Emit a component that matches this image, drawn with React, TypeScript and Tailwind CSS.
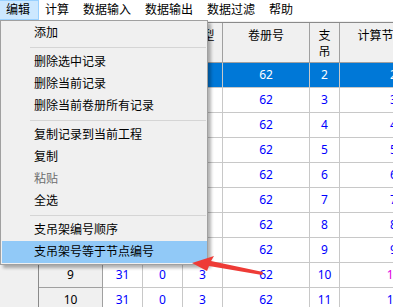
import React from 'react';

const font = { fontFamily: '"Noto Sans", "Noto Sans CJK SC", sans-serif' };

const menuBar = ['编辑', '计算', '数据输入', '数据输出', '数据过滤', '帮助'];

type Item = { label?: string; sep?: boolean; disabled?: boolean; active?: boolean };

const menuItems: Item[] = [
  { label: '添加' },
  { sep: true },
  { label: '删除选中记录' },
  { label: '删除当前记录' },
  { label: '删除当前卷册所有记录' },
  { sep: true },
  { label: '复制记录到当前工程' },
  { label: '复制' },
  { label: '粘贴', disabled: true },
  { label: '全选' },
  { sep: true },
  { label: '支吊架编号顺序' },
  { label: '支吊架号等于节点编号', active: true },
];

const rows = Array.from({ length: 10 }, (_, i) => i + 1);

export default function App() {
  return (
    <div className="relative w-[393px] h-[307px] overflow-hidden bg-[#f0f0f0] text-[12px] text-black" style={font}>
      {/* Menu bar */}
      <div className="flex h-[21px] bg-white">
        {menuBar.map((m, i) => (
          <div
            key={m}
            className={
              i === 0
                ? 'flex items-center pl-[6px] pr-[8px] h-[20px] bg-[#cce8ff] border border-[#99d1ff] -ml-px'
                : 'flex items-center pl-[6px] pr-[8px] h-[20px]'
            }
          >
            {m}
          </div>
        ))}
      </div>
      <div className="h-px" />

      {/* Grid */}
      <div className="flex">
        <div className="w-[38px] shrink-0" />
        <div className="grid grid-cols-[64px_40px_40px_40px_87px_30px_108px] shrink-0 border-l border-t border-[#8a8a8a]">
          {/* header */}
          <div className="h-[40px] bg-[#f0f0f0] border-r border-b border-[#a0a0a0]" />
          <div className="h-[40px] bg-[#f0f0f0] border-r border-b border-[#a0a0a0] flex justify-center pt-[5px] leading-[16px]">编号</div>
          <div className="h-[40px] bg-[#f0f0f0] border-r border-b border-[#a0a0a0] flex justify-center pt-[5px] leading-[16px]">序号</div>
          <div className="h-[40px] bg-[#f0f0f0] border-r border-b border-[#a0a0a0] flex justify-center pt-[5px] leading-[16px] whitespace-nowrap">类型</div>
          <div className="h-[40px] bg-[#f0f0f0] border-r border-b border-[#a0a0a0] flex justify-center pt-[5px] leading-[16px]">卷册号</div>
          <div className="h-[40px] bg-[#f0f0f0] border-r border-b border-[#a0a0a0] text-center pt-[5px] leading-[16px]">
            支<br />吊
          </div>
          <div className="h-[40px] bg-[#f0f0f0] border-r border-b border-[#a0a0a0] flex justify-center pt-[5px] leading-[16px] whitespace-nowrap">计算节点编号</div>

          {rows.map((r, i) => {
            const sel = i === 0;
            const cell = sel
              ? 'h-[25px] flex items-center justify-center border-r border-b border-[#c8c8c8] bg-[#0078d7] text-white'
              : 'h-[25px] flex items-center justify-center border-r border-b border-[#c8c8c8] bg-white text-[#0000ff]';
            return (
              <React.Fragment key={r}>
                <div className="h-[25px] flex items-center justify-center bg-[#f0f0f0] border-r border-b border-[#a0a0a0]">{r}</div>
                <div className={cell}>31</div>
                <div className={cell}>0</div>
                <div className={cell}>3</div>
                <div className={cell}>62</div>
                <div className={cell}>{r + 1}</div>
                <div className={r + 1 === 10 ? cell.replace('text-[#0000ff]', 'text-[#e000e0]') : cell}>{r + 1}</div>
              </React.Fragment>
            );
          })}
        </div>
      </div>

      {/* Dropdown menu */}
      <div className="absolute left-0 top-[20px] w-[208px] bg-[#f0f0f0] border border-[#a0a0a0] pl-px pt-px pb-[1px] shadow-[3px_3px_3px_rgba(0,0,0,0.3)]">
        {menuItems.map((it, i) =>
          it.sep ? (
            <div key={i} className="h-[7px] flex items-center pl-[28px] pr-px">
              <div className="h-px w-full bg-[#d5d5d5]" />
            </div>
          ) : (
            <div
              key={i}
              className={
                it.active
                  ? 'h-[22px] flex items-center pl-[32px] bg-[#91c9f7]'
                  : it.disabled
                  ? 'h-[22px] flex items-center pl-[32px] text-[#6d6d6d]'
                  : 'h-[22px] flex items-center pl-[32px]'
              }
            >
              {it.label}
            </div>
          )
        )}
      </div>

      {/* Red arrow annotation */}
      <svg className="absolute left-0 top-0 pointer-events-none" width="393" height="307">
        <polygon points="192,263 214,256 211,261 263,272 262,275 209,266 207,271" fill="#ee3b36" />
      </svg>
    </div>
  );
}
